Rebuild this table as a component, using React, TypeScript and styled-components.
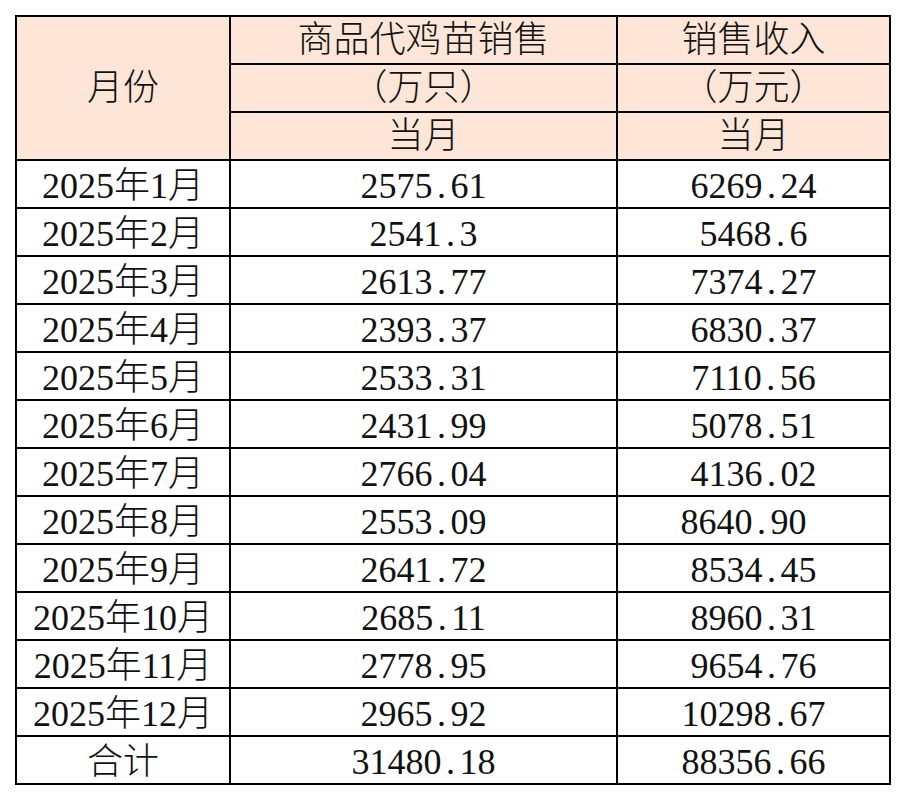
import styled, { createGlobalStyle } from 'styled-components'

// 商品代鸡苗销售 / 销售收入 monthly table

const rows = [
  { month: '2025年1月', chicks: '2575.61', revenue: '6269.24' },
  { month: '2025年2月', chicks: '2541.3', revenue: '5468.6' },
  { month: '2025年3月', chicks: '2613.77', revenue: '7374.27' },
  { month: '2025年4月', chicks: '2393.37', revenue: '6830.37' },
  { month: '2025年5月', chicks: '2533.31', revenue: '7110.56' },
  { month: '2025年6月', chicks: '2431.99', revenue: '5078.51' },
  { month: '2025年7月', chicks: '2766.04', revenue: '4136.02' },
  { month: '2025年8月', chicks: '2553.09', revenue: '8640.90', shift: true },
  { month: '2025年9月', chicks: '2641.72', revenue: '8534.45' },
  { month: '2025年10月', chicks: '2685.11', revenue: '8960.31' },
  { month: '2025年11月', chicks: '2778.95', revenue: '9654.76' },
  { month: '2025年12月', chicks: '2965.92', revenue: '10298.67' },
  { month: '合计', chicks: '31480.18', revenue: '88356.66' },
]

// SimSun-like numbers: the period takes a half-width cell
function Num({ value }: { value: string }) {
  const [int, dec] = value.split('.')
  return (
    <>
      {int}
      {dec !== undefined && (
        <>
          <Dot>.</Dot>
          {dec}
        </>
      )}
    </>
  )
}

export default function App() {
  return (
    <>
      <GlobalStyle />
      <Page>
        <Table>
          <colgroup>
            <col style={{ width: 214 }} />
            <col style={{ width: 387 }} />
            <col style={{ width: 273 }} />
          </colgroup>
          <thead>
            <tr>
              <Head rowSpan={3}>月份</Head>
              <Head>商品代鸡苗销售</Head>
              <Head>销售收入</Head>
            </tr>
            <tr>
              <Head>（万只）</Head>
              <Head>（万元）</Head>
            </tr>
            <tr>
              <Head>当月</Head>
              <Head>当月</Head>
            </tr>
          </thead>
          <tbody>
            {rows.map((r) => (
              <tr key={r.month}>
                <Cell>{r.month}</Cell>
                <Cell><Num value={r.chicks} /></Cell>
                <Cell $shift={r.shift}><Num value={r.revenue} /></Cell>
              </tr>
            ))}
          </tbody>
        </Table>
      </Page>
    </>
  )
}

// ------------------ STYLING ------------------

const GlobalStyle = createGlobalStyle`
  body {
    margin: 0;
    background: #ffffff;
  }
`

const Page = styled.div`
  padding: 15px 0 0 15px;
`

const Table = styled.table`
  border-collapse: collapse;
  table-layout: fixed;
  width: 876px;
  font-family: "Liberation Serif", "Noto Sans CJK SC", serif;
  font-size: 36px;
  font-weight: 300;
  color: #111;
`

const Head = styled.th`
  height: 46px;
  padding: 0;
  border: 2px solid #000;
  background: #fde5d7;
  font-weight: 300;
  text-align: center;
  vertical-align: middle;
  line-height: 34px;
`

const Cell = styled.td<{ $shift?: boolean }>`
  height: 42px;
  padding: 4px ${(p) => (p.$shift ? '20px' : '0')} 0 0;
  border: 2px solid #000;
  text-align: center;
  vertical-align: middle;
  line-height: 34px;
  white-space: nowrap;
`

const Dot = styled.span`
  display: inline-block;
  width: 0.5em;
  text-align: center;
`
